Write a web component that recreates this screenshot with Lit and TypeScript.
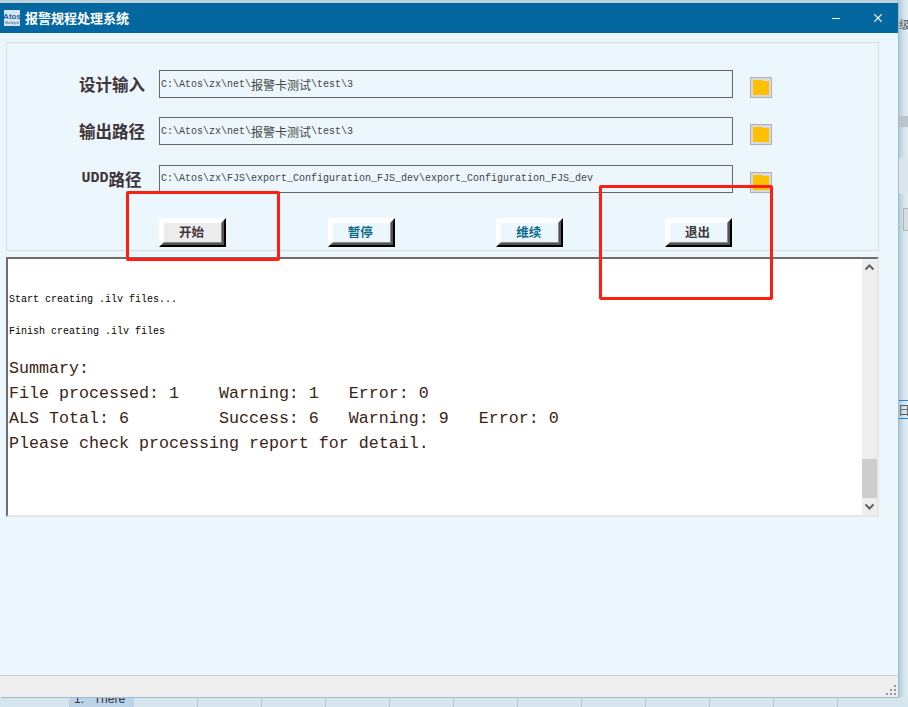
import { LitElement, html, css, svg } from "lit";
import { customElement } from "lit/decorators.js";

const folder = html`<div class="folder"><svg width="16" height="16" viewBox="0 0 16 16"><path d="M0 0H9L10 1H16V15H0Z" fill="#ffc000"/></svg></div>`;

const grip = [[0, 8], [4, 8], [8, 8], [4, 4], [8, 4], [8, 0]].map(
  ([x, y]) => svg`<rect x=${x} y=${y} width="2" height="2" fill="#999"/>`
);

const rules = Array.from({ length: 11 }, (_, i) => 197 + i * 64);

@customElement("app-root")
export class AppRoot extends LitElement {
  static styles = css`
    :host { display: block; width: 908px; height: 707px; position: relative; overflow: hidden; background: #c9dde8; font-family: "Liberation Mono", "Noto Sans CJK SC", monospace; }
    .backdrop { position: absolute; inset: 0; }
    .strip-top { position: absolute; left: 0; top: 0; width: 908px; height: 3px; background: #bcd0da; }
    .strip-right { position: absolute; left: 898px; top: 0; width: 10px; height: 707px; background: linear-gradient(90deg, #a9c6d8, #d5e4ec 60%, #e3edf2); }
    .band { position: absolute; left: 898px; width: 10px; background: #b9c5cc; }
    .band.a { top: 116px; height: 11px; }
    .band.b { top: 158px; height: 36px; background: #dbe5ea; }
    .chip { position: absolute; left: 903px; top: 208px; width: 5px; height: 23px; background: #d7dde0; border: 1px solid #aab4b9; border-right: 0; box-sizing: border-box; }
    .side-text { position: absolute; left: 899px; font: 11px "Noto Sans CJK SC", sans-serif; color: #555; white-space: nowrap; }
    .side-text.a { top: 16px; }
    .side-text.b { top: 400px; left: 898px; font-size: 12px; line-height: 15px; height: 15px; padding: 1px 0; border-top: 1px solid #1b86d4; border-bottom: 1px solid #1b86d4; width: 10px; overflow: hidden; }
    .floor { position: absolute; left: 0; top: 697px; width: 908px; height: 10px; background: #d6e6ee; }
    .cell { position: absolute; left: 69px; top: 697px; width: 65px; height: 10px; background: #bcd2e6; overflow: hidden; }
    .cell span { position: absolute; left: 5px; top: -5px; font: 12px/14px "Liberation Sans", sans-serif; color: #334; white-space: pre; }
    .rule { position: absolute; top: 697px; width: 1px; height: 10px; background: #b5c5cf; }

    .window { position: relative; box-sizing: border-box; top: 3px; width: 898px; height: 694px; background: #ebf7fd; display: flex; flex-direction: column; box-shadow: 1px 1px 0 #9fbccd; }
    .title { height: 30px; background: #05679f; color: #fff; display: flex; align-items: center; padding: 0 16px 0 4px; flex: none; }
    .logo { width: 16px; height: 16px; background: #d5e6f1; display: flex; flex-direction: column; align-items: center; justify-content: center; overflow: hidden; color: #1f5fa8; font: bold 8px/9px "Liberation Sans", sans-serif; margin-right: 5px; }
    .logo small { font-size: 3px; line-height: 4px; color: #5a7f9f; }
    .name { font: bold 13px/18px "Noto Sans CJK SC", sans-serif; flex: 1; }
    .ctl { display: flex; align-items: center; gap: 34px; }
    .panel { margin: 9px 0 0 6px; width: 873px; box-sizing: border-box; border: 1px solid #d8dcde; padding: 27px 0 3px 72px; flex: none; }
    .rows { display: grid; grid-template-columns: 66px 574px 22px; column-gap: 14px; row-gap: 19.4px; }
    .rows .folder { margin-left: 3px; }
    .label { display: flex; align-items: center; justify-content: center; white-space: nowrap; height: 28px; font: bold 16.5px "Noto Sans CJK SC", sans-serif; color: #3f3539; }
    .label b { font: bold 15px "Liberation Mono", monospace; margin-left: -1px; }
    .field { box-sizing: border-box; height: 28px; border: 1px solid #666; padding-left: 1px; display: flex; align-items: center; font-size: 10px; color: #444; white-space: pre; }
    .cjk { font: 12px "Noto Sans CJK SC", sans-serif; }
    .folder { box-sizing: border-box; width: 22px; height: 21px; align-self: end; background: #d9d9d9; border: 1px solid #b0b0b0; padding: 2px; display: flex; }
    .buttons { display: flex; justify-content: space-between; width: 573px; margin: 25px 0 0 80px; }
    .btn { border: 2px solid; border-color: #fff #000 #000 #fff; width: 67px; height: 29px; box-sizing: border-box; }
    .btn > div { height: 100%; box-sizing: border-box; border: 2px solid; border-color: #fff #555 #555 #fff; }
    .btn > div > div { height: 100%; box-sizing: border-box; border: 1px solid; border-color: #fff #8a8a8a #8a8a8a #fff; display: flex; align-items: center; justify-content: center; padding: 0 2px 2px 0; font: bold 12.5px "Noto Sans CJK SC", sans-serif; color: #3f3539; background: #ebf7fd; }
    .btn.grey > div > div { background: #ececec; }
    .btn.teal > div > div { color: #0b6a8a; }
    .log { margin: 6px 0 0 6px; width: 873px; height: 260px; box-sizing: border-box; background: #fff; border: 2px solid; border-color: #6d6d6d #e4e6e8 #e4e6e8 #6d6d6d; display: flex; flex: none; }
    .text { flex: 1; padding: 33px 0 0 1px; overflow: hidden; }
    .small { font-size: 10px; line-height: 16px; color: #000; white-space: pre; margin-bottom: 16px; }
    .big { font-size: 16.66px; line-height: 25px; color: #3a2418; white-space: pre; }
    .bar { width: 15px; background: #eee; display: flex; flex-direction: column; }
    .bar svg { flex: none; }
    .track { flex: 1; display: flex; flex-direction: column; justify-content: flex-end; }
    .thumb { height: 39px; background: #cdcdcd; }
    .spacer { flex: 1; }
    .status { height: 22px; flex: none; box-sizing: border-box; background: #eee; border-top: 1px solid #d0d0d0; display: flex; justify-content: flex-end; align-items: flex-end; padding: 0 2px 2px 0; }
    .mark { position: absolute; box-sizing: border-box; border: 3px solid #ff1e12; border-radius: 2px; }
    .mark.one { left: 126px; top: 191px; width: 154px; height: 70px; }
    .mark.two { left: 599px; top: 185px; width: 174px; height: 115px; }
  `;

  render() {
    return html`
      <div class="backdrop">
        <div class="strip-top"></div>
        <div class="strip-right"></div>
        <div class="band a"></div>
        <div class="band b"></div>
        <div class="chip"></div>
        <div class="side-text a">级</div>
        <div class="side-text b">日)</div>
        <div class="floor"></div>
        <div class="cell"><span>1.   There</span></div>
        ${rules.map((x) => html`<div class="rule" style="left:${x}px"></div>`)}
      </div>
      <div class="window">
        <div class="title">
          <div class="logo">Atos<small>Worldgrid</small></div>
          <div class="name">报警规程处理系统</div>
          <div class="ctl">
            <svg width="8" height="8" viewBox="0 0 8 8"><path d="M0 4.5H8" stroke="#fff" stroke-width="1"/></svg>
            <svg width="8" height="8" viewBox="0 0 8 8"><path d="M0 0L8 8M8 0L0 8" stroke="#fff" stroke-width="1.2"/></svg>
          </div>
        </div>
        <div class="panel">
          <div class="rows">
            <div class="label">设计输入</div>
            <div class="field">C:\\Atos\\zx\\net\\<span class="cjk">报警卡测试</span>\\test\\3</div>
            ${folder}
            <div class="label">输出路径</div>
            <div class="field">C:\\Atos\\zx\\net\\<span class="cjk">报警卡测试</span>\\test\\3</div>
            ${folder}
            <div class="label"><b>UDD</b>路径</div>
            <div class="field">C:\\Atos\\zx\\FJS\\export_Configuration_FJS_dev\\export_Configuration_FJS_dev</div>
            ${folder}
          </div>
          <div class="buttons">
            <div class="btn grey"><div><div>开始</div></div></div>
            <div class="btn teal"><div><div>暂停</div></div></div>
            <div class="btn teal"><div><div>维续</div></div></div>
            <div class="btn"><div><div>退出</div></div></div>
          </div>
        </div>
        <div class="log">
          <div class="text">
            <div class="small">Start creating .ilv files...</div>
            <div class="small">Finish creating .ilv files</div>
            <div class="big">Summary:</div>
            <div class="big">File processed: 1    Warning: 1   Error: 0</div>
            <div class="big">ALS Total: 6         Success: 6   Warning: 9   Error: 0</div>
            <div class="big">Please check processing report for detail.</div>
          </div>
          <div class="bar">
            <svg width="15" height="17" viewBox="0 0 15 17"><path d="M3.5 10.5L7.5 6.5L11.5 10.5" fill="none" stroke="#606060" stroke-width="2"/></svg>
            <div class="track"><div class="thumb"></div></div>
            <svg width="15" height="17" viewBox="0 0 15 17"><path d="M3.5 6.5L7.5 10.5L11.5 6.5" fill="none" stroke="#606060" stroke-width="2"/></svg>
          </div>
        </div>
        <div class="spacer"></div>
        <div class="status">
          <svg width="10" height="10" viewBox="0 0 10 10">${grip}</svg>
        </div>
      </div>
      <div class="mark one"></div>
      <div class="mark two"></div>
    `;
  }
}
